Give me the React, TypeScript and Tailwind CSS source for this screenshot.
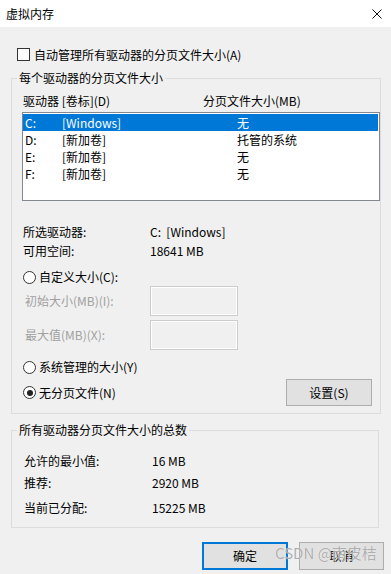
import React from "react";

const font = { fontFamily: '"Noto Sans CJK SC", "Noto Sans", sans-serif' };

const drives = [
  { letter: "C:", label: "[Windows]", size: "无", selected: true },
  { letter: "D:", label: "[新加卷]", size: "托管的系统", selected: false },
  { letter: "E:", label: "[新加卷]", size: "无", selected: false },
  { letter: "F:", label: "[新加卷]", size: "无", selected: false },
];

function Radio({ checked, label }: { checked?: boolean; label: string }) {
  return (
    <div className="flex h-4 items-center">
      <span className="ml-[11px] grid h-[13px] w-[13px] place-items-center rounded-full border border-[#333333] bg-white">
        {checked ? <span className="h-[6px] w-[6px] rounded-full bg-[#222222]" /> : null}
      </span>
      <span className="ml-[3px] leading-4">{label}</span>
    </div>
  );
}

function InfoRow({ label, value, valueX }: { label: string; value: string; valueX: string }) {
  return (
    <div className="flex h-4 items-center leading-4">
      <span className={"ml-[11px] " + valueX}>{label}</span>
      <span className="whitespace-pre">{value}</span>
    </div>
  );
}

export default function App() {
  return (
    <div className="relative h-[574px] w-[391px] overflow-hidden bg-[#f0f0f0] text-[12px] text-black" style={font}>
      {/* title bar */}
      <div className="flex h-[27px] items-center justify-between bg-white pl-[6px] pr-[10px]">
        <span className="text-[12px] leading-4">虚拟内存</span>
        <svg width="10" height="10" viewBox="0 0 10 10" className="mr-[-1px]">
          <path d="M0.5 0.5 L9.5 9.5 M9.5 0.5 L0.5 9.5" stroke="#111" strokeWidth="1" />
        </svg>
      </div>

      {/* auto manage */}
      <div className="mt-[21px] flex h-[13px] items-center pl-[17px]">
        <span className="h-[13px] w-[13px] border border-[#333333] bg-white" />
        <span className="ml-[4px] leading-4">自动管理所有驱动器的分页文件大小(A)</span>
      </div>

      {/* per drive */}
      <fieldset className="ml-[11px] mt-[9px] w-[368px] border border-[#dcdcdc] pb-[7px]">
        <legend className="ml-[5px] px-[2px] leading-4">每个驱动器的分页文件大小</legend>
        <div className="mt-[7px] flex h-4 items-center leading-4">
          <span className="ml-[11px] w-[180px]">驱动器 [卷标](D)</span>
          <span>分页文件大小(MB)</span>
        </div>
        <div className="ml-[10px] mt-[3px] h-[89px] w-[358px] border border-[#828790] bg-white pt-[1px]">
          {drives.map((d) => (
            <div
              key={d.letter}
              className={
                "flex h-[17px] w-[355px] items-center leading-4 " +
                (d.selected ? "bg-[#0078d7] text-white" : "")
              }
            >
              <span className="ml-[2px] w-[37px]">{d.letter}</span>
              <span className="w-[175px]">{d.label}</span>
              <span>{d.size}</span>
            </div>
          ))}
        </div>

        <div className="mt-[23px]">
          <InfoRow label="所选驱动器:" value="C:  [Windows]" valueX="w-[127px]" />
        </div>
        <div className="mt-[3px]">
          <InfoRow label="可用空间:" value="18641 MB" valueX="w-[127px]" />
        </div>

        <div className="mt-[10px]">
          <Radio label="自定义大小(C):" />
        </div>

        <div className="mt-[1px] flex h-[30px] items-center">
          <span className="ml-[13px] w-[125px] leading-4 text-[#a0a0a0]">初始大小(MB)(I):</span>
          <span className="h-[30px] w-[88px] border border-[#cccccc] shadow-[inset_0_0_0_1px_#ffffff]" />
        </div>
        <div className="mt-[4px] flex h-[30px] items-center">
          <span className="ml-[13px] w-[125px] leading-4 text-[#a0a0a0]">最大值(MB)(X):</span>
          <span className="h-[30px] w-[88px] border border-[#cccccc] shadow-[inset_0_0_0_1px_#ffffff]" />
        </div>

        <div className="mt-[9px]">
          <Radio label="系统管理的大小(Y)" />
        </div>

        <div className="mt-[4px] flex h-[27px] items-center justify-between">
          <Radio checked label="无分页文件(N)" />
          <button
            type="button"
            className="mr-[8px] h-[27px] w-[86px] border border-[#adadad] bg-[#e1e1e1] leading-4"
          >
            设置(S)
          </button>
        </div>
      </fieldset>

      {/* totals */}
      <fieldset className="ml-[11px] mt-[8px] w-[368px] border border-[#dcdcdc] pb-[11px]">
        <legend className="ml-[5px] px-[2px] leading-4">所有驱动器分页文件大小的总数</legend>
        <div className="mt-[15px]">
          <InfoRow label="允许的最小值:" value="16 MB" valueX="ml-[12px] w-[128px]" />
        </div>
        <div className="mt-[6px]">
          <InfoRow label="推荐:" value="2920 MB" valueX="ml-[12px] w-[128px]" />
        </div>
        <div className="mt-[9px]">
          <InfoRow label="当前已分配:" value="15225 MB" valueX="ml-[12px] w-[128px]" />
        </div>
      </fieldset>

      {/* dialog buttons */}
      <div className="mt-[14px] flex gap-[11px] pl-[202px]">
        <button type="button" className="h-[28px] w-[86px] border-2 border-[#0078d7] bg-[#e1e1e1] leading-4">
          确定
        </button>
        <button type="button" className="h-[28px] w-[85px] border border-[#adadad] bg-[#e1e1e1] leading-4">
          取消
        </button>
      </div>

      {/* watermark */}
      <div className="pointer-events-none absolute left-[275px] top-[544px] text-[15px] leading-[18px] text-[#9a9a9a]/80 [text-shadow:0_0_1px_#ffffff]">
        CSDN @南皮桔
      </div>
    </div>
  );
}
